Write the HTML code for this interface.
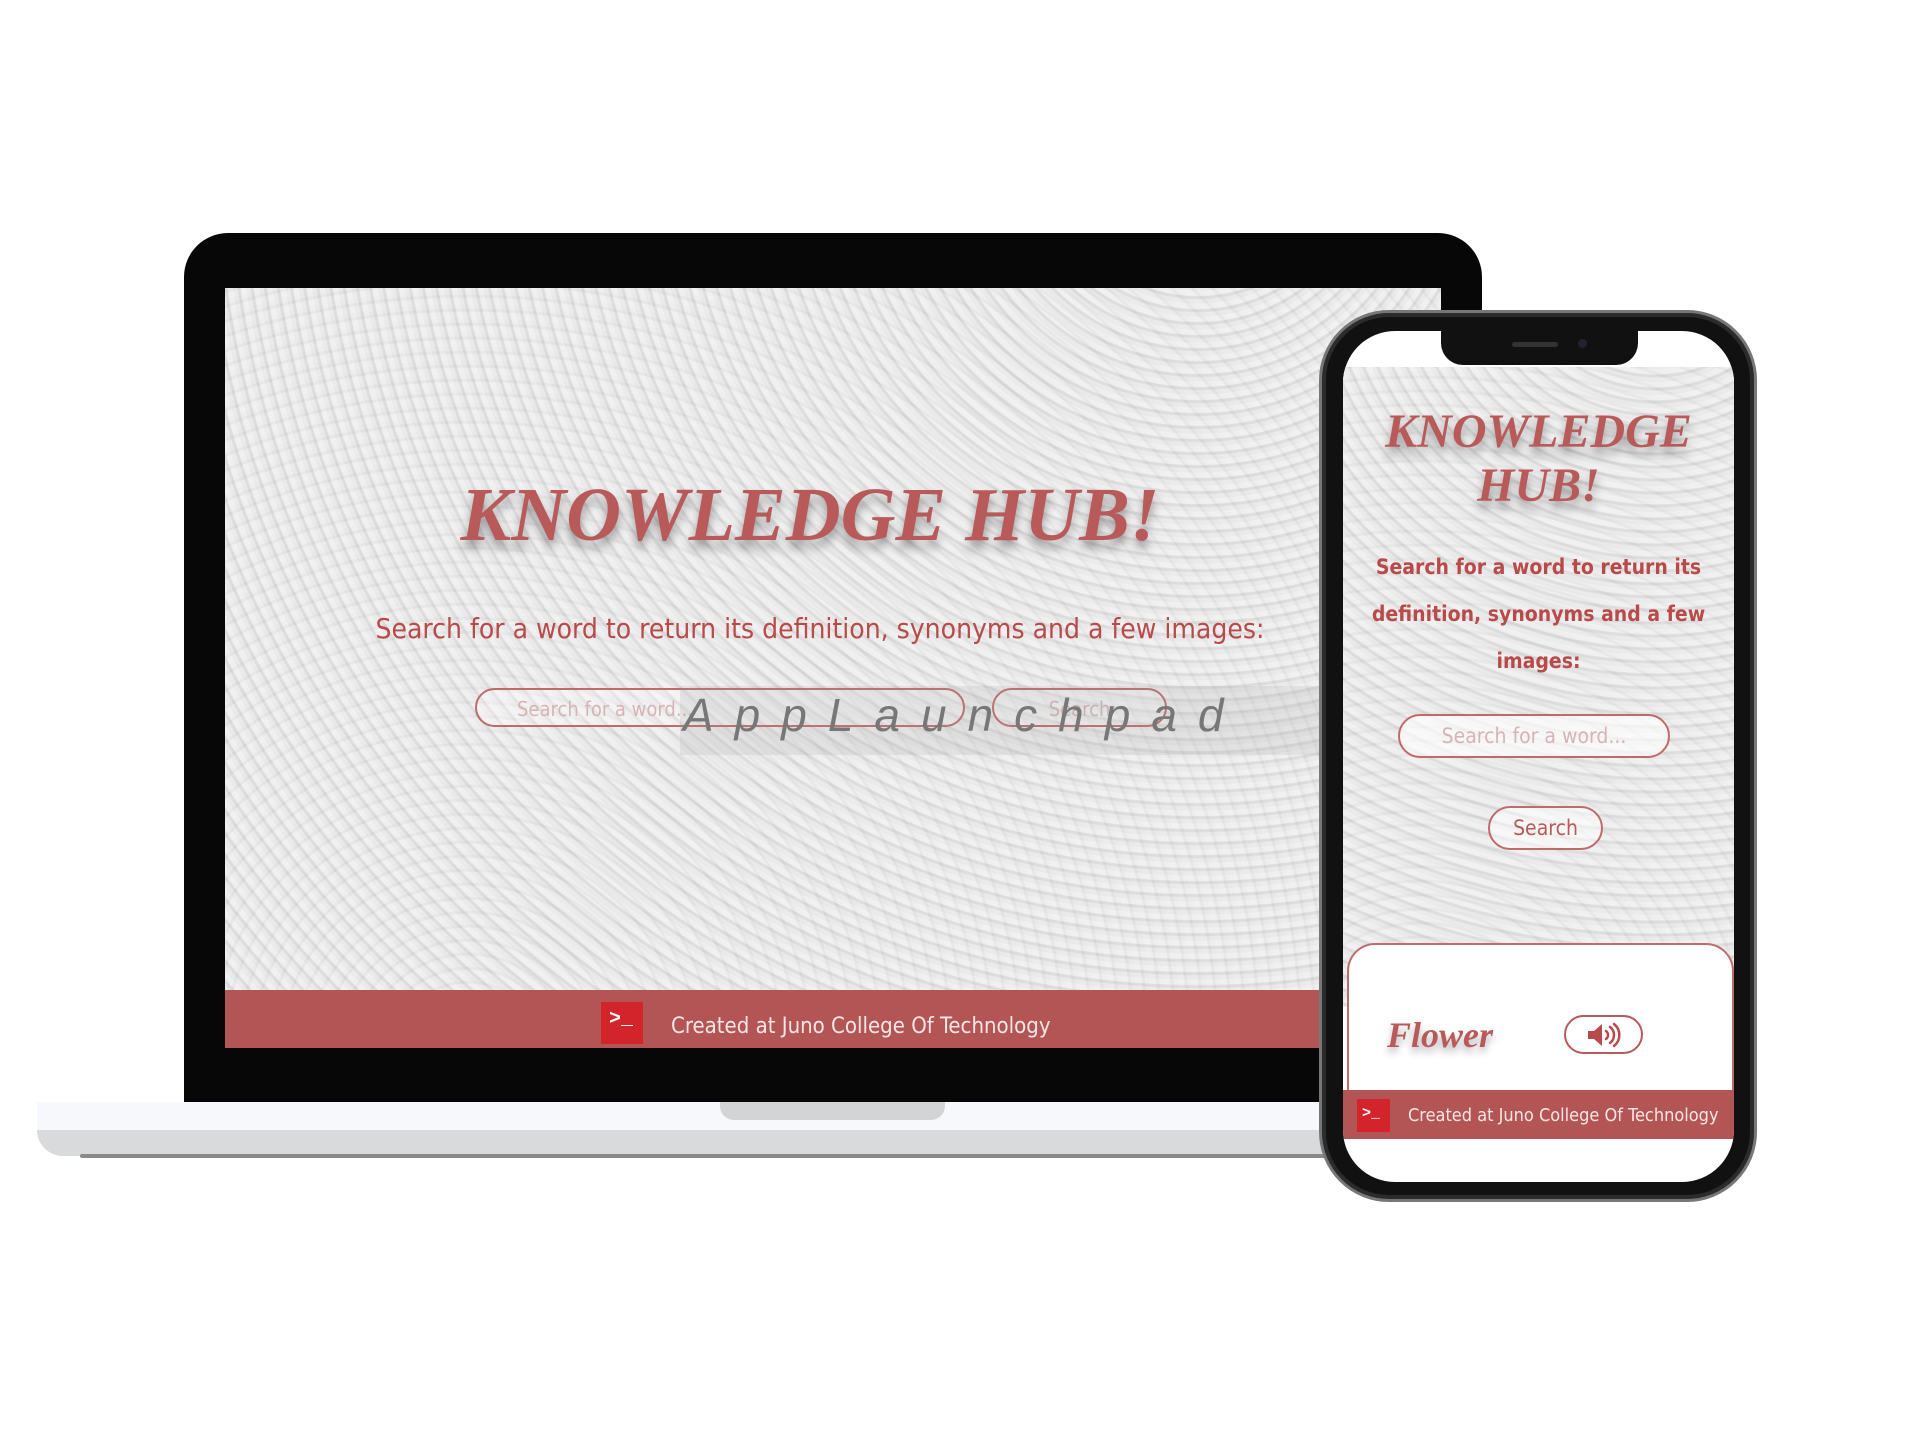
<!DOCTYPE html>
<html><head><meta charset="utf-8"><style>
*{margin:0;padding:0;box-sizing:border-box}
body{width:1920px;height:1440px;background:#fff;position:relative;overflow:hidden;font-family:"Liberation Sans",sans-serif}
.abs{position:absolute}
.tex{background:
 repeating-radial-gradient(circle at 20% 110%, #e9e9e9 0 6px,#dcdcdc 7px 9px,#e6e6e6 10px 14px),
 #e3e3e3;}
.tex2{background:
 repeating-radial-gradient(circle at 80% -20%, rgba(255,255,255,.35) 0 5px, rgba(200,200,200,.35) 6px 8px, rgba(240,240,240,.3) 9px 13px);}
.title{font-family:"Liberation Serif",serif;font-style:italic;font-weight:bold;color:#b95a5a;text-shadow:0 8px 10px rgba(0,0,0,.35)}
.sub{font-family:"DejaVu Sans Condensed","Liberation Sans",sans-serif;color:#b94a4a;text-align:center}
.pill{border:2px solid #c06a6a;border-radius:30px;background:rgba(255,255,255,.25)}
</style></head><body>
<!-- laptop base -->
<div class="abs" style="left:37px;top:1102px;width:1592px;height:30px;background:#f7f8fc"></div>
<div class="abs" style="left:37px;top:1130px;width:1592px;height:26px;background:#d9dadc;border-radius:0 0 80px 80px"></div>
<div class="abs" style="left:80px;top:1154px;width:1500px;height:4px;background:#8a8a8a;border-radius:2px"></div>
<div class="abs" style="left:720px;top:1102px;width:225px;height:18px;background:#d3d4d6;border-radius:0 0 14px 14px"></div>
<!-- bezel -->
<div class="abs" style="left:184px;top:233px;width:1298px;height:869px;background:#070707;border-radius:44px 44px 0 0"></div>
<!-- screen -->
<div class="abs tex" style="left:225px;top:288px;width:1216px;height:702px"><div class="abs tex2" style="inset:0"></div></div>
<div class="abs" style="left:225px;top:990px;width:1216px;height:58px;background:#b45555"></div>
<div class="abs" style="left:601px;top:1002px;width:42px;height:42px;background:#d3232b;color:#fff;font:bold 20px 'Liberation Mono',monospace;padding:6px 0 0 8px">&gt;_</div>
<div class="abs" style="left:671px;top:1014px;color:#f4e6e6;font-size:22px;font-family:'DejaVu Sans Condensed',sans-serif">Created at Juno College Of Technology</div>
<div class="abs title" style="left:215px;top:472px;width:1190px;text-align:center;font-size:76px">KNOWLEDGE HUB!</div>
<div class="abs sub" style="left:225px;top:612px;width:1190px;font-size:28px">Search for a word to return its definition, synonyms and a few images:</div>
<div class="abs pill" style="left:475px;top:688px;width:490px;height:39px;color:#d7b4b4;font-size:20px;padding:7px 0 0 40px;font-family:'DejaVu Sans Condensed',sans-serif">Search for a word...</div>
<div class="abs pill" style="left:992px;top:688px;width:175px;height:39px;color:#d7b4b4;font-size:20px;text-align:center;padding-top:7px;font-family:'DejaVu Sans Condensed',sans-serif">Search</div>
<div class="abs" style="left:680px;top:686px;width:665px;height:69px;background:rgba(160,160,160,.18)"></div>
<div class="abs" style="left:683px;top:688px;color:#777;font-style:italic;font-size:46px;letter-spacing:21px">AppLaunchpad</div>
<!-- phone -->
<div class="abs" style="left:1319px;top:310px;width:438px;height:892px;background:#111;border-radius:70px;border:3px solid #777;box-shadow:inset 0 0 0 4px #2b2b2b"></div>
<div class="abs" style="left:1343px;top:331px;width:391px;height:851px;background:#fff;border-radius:52px;overflow:hidden">
 <div class="abs tex" style="left:0;top:36px;width:391px;height:640px"><div class="abs tex2" style="inset:0"></div></div>
 <div class="abs title" style="left:0;top:74px;width:391px;text-align:center;font-size:48px;line-height:54px">KNOWLEDGE<br>HUB!</div>
 <div class="abs sub" style="left:14px;top:213px;width:363px;font-size:21px;font-weight:bold;line-height:47px">Search for a word to return its definition, synonyms and a few images:</div>
 <div class="abs pill" style="left:55px;top:383px;width:272px;height:44px;color:#d7b4b4;font-size:21px;text-align:center;padding-top:8px;font-family:'DejaVu Sans Condensed',sans-serif;background:rgba(255,255,255,.6)">Search for a word...</div>
 <div class="abs pill" style="left:145px;top:475px;width:115px;height:44px;color:#b95a5a;font-size:21px;text-align:center;padding-top:8px;font-family:'DejaVu Sans Condensed',sans-serif;background:rgba(255,255,255,.5)">Search</div>
 <div class="abs" style="left:4px;top:612px;width:387px;height:160px;background:#fff;border:2px solid #c26b6b;border-bottom:none;border-radius:28px 28px 0 0"></div>
 <div class="abs title" style="left:44px;top:683px;font-size:36px;text-shadow:0 5px 8px rgba(0,0,0,.3)">Flower</div>
 <div class="abs" style="left:221px;top:684px;width:79px;height:39px;border:2px solid #b95a5a;border-radius:20px">
  <svg class="abs" style="left:20px;top:5px" width="40" height="26" viewBox="0 0 40 26"><path d="M2 9h6l8-7v22l-8-7H2z" fill="#b94a4a"/><path d="M20 9a5 5 0 0 1 0 8M24 5a10 10 0 0 1 0 16M28 2a14 14 0 0 1 0 22" stroke="#b94a4a" stroke-width="2.5" fill="none" stroke-linecap="round"/></svg>
 </div>
 <div class="abs" style="left:0;top:759px;width:391px;height:49px;background:#b45555"></div>
 <div class="abs" style="left:14px;top:768px;width:33px;height:33px;background:#d3232b;color:#fff;font:bold 15px 'Liberation Mono',monospace;padding:6px 0 0 5px">&gt;_</div>
 <div class="abs" style="left:65px;top:774px;color:#f4e6e6;font-size:18px;font-family:'DejaVu Sans Condensed',sans-serif">Created at Juno College Of Technology</div>
</div>
<div class="abs" style="left:1441px;top:331px;width:197px;height:34px;background:#111;border-radius:0 0 22px 22px"></div>
<div class="abs" style="left:1512px;top:342px;width:46px;height:5px;background:#333;border-radius:3px"></div>
<div class="abs" style="left:1578px;top:339px;width:9px;height:9px;background:#223;border-radius:50%"></div>
</body></html>
